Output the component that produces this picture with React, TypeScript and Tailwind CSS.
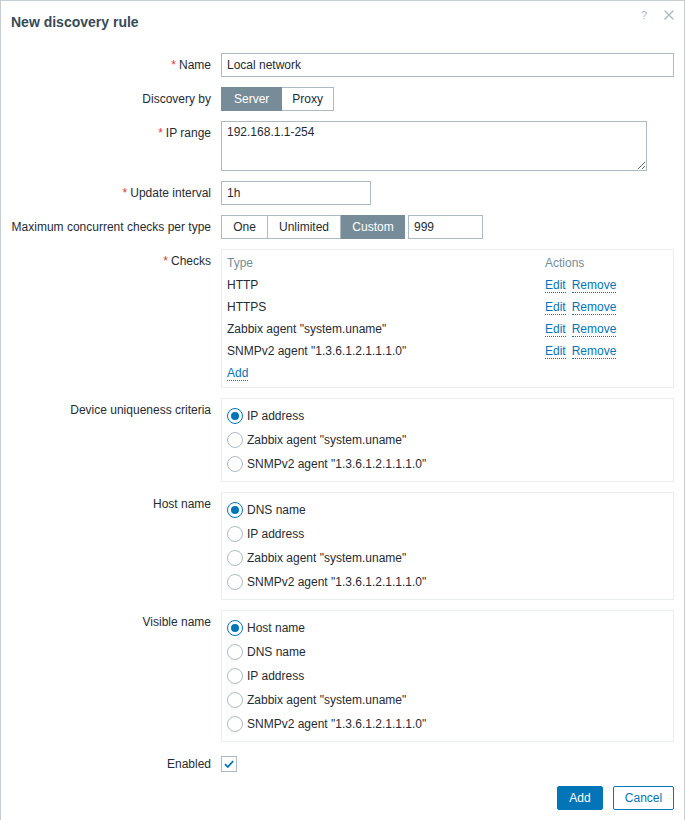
import { X } from 'lucide-react';

const checks = [
  'HTTP',
  'HTTPS',
  'Zabbix agent "system.uname"',
  'SNMPv2 agent "1.3.6.1.2.1.1.1.0"',
];

function Label({ text, required }: { text: string; required?: boolean }) {
  return (
    <div className="text-right leading-[24px] text-[#1f2c33]">
      {required && <span className="text-[#e33734] mr-[3px]">*</span>}
      {text}
    </div>
  );
}

function Radio({ label, checked }: { label: string; checked?: boolean }) {
  return (
    <div className="flex items-center h-6 gap-1">
      <span
        className={
          'w-4 h-4 rounded-full border flex items-center justify-center bg-white ' +
          (checked ? 'border-[#0275b8]' : 'border-[#acbbc2]')
        }
      >
        {checked && <span className="w-2 h-2 rounded-full bg-[#0275b8]" />}
      </span>
      <span>{label}</span>
    </div>
  );
}

function RadioBox({ items, selected }: { items: string[]; selected: number }) {
  return (
    <div className="border border-[#ebeef0] py-[5px] px-[5px]">
      {items.map((it, i) => (
        <Radio key={it} label={it} checked={i === selected} />
      ))}
    </div>
  );
}

function Link({ children }: { children: React.ReactNode }) {
  return (
    <span className="text-[#0275b8] border-b border-dotted border-[#0275b8] leading-[14px]">
      {children}
    </span>
  );
}

export default function App() {
  return (
    <div
      className="w-[685px] min-h-[830px] bg-white border border-[#c5cdd2] relative text-[12px] text-[#1f2c33]"
      style={{ fontFamily: '"Liberation Sans", Arial, sans-serif' }}
    >
      {/* header */}
      <div className="h-[41px] pt-[13px] px-[10px]">
        <h1 className="text-[14px] leading-[16px] font-bold text-[#384a56]">New discovery rule</h1>
      </div>
      <div className="absolute top-[6px] right-[7px] flex items-center gap-[14px] text-[#acbbc2]">
        <span className="text-[11px] leading-[14px]">?</span>
        <X className="w-[16px] h-[16px]" strokeWidth={2} />
      </div>

      {/* form */}
      <div className="mt-[11px] pr-[10px] grid grid-cols-[210px_1fr] gap-x-[10px] gap-y-[10px]">
        <Label text="Name" required />
        <input
          className="h-6 w-full border border-[#acbbc2] px-[5px] outline-none"
          defaultValue="Local network"
        />

        <Label text="Discovery by" />
        <div className="flex h-6">
          <span className="px-3 flex items-center bg-[#768d99] border border-[#768d99] text-white">Server</span>
          <span className="px-[10px] flex items-center border border-l-0 border-[#acbbc2]">Proxy</span>
        </div>

        <Label text="IP range" required />
        <textarea
          className="w-[426px] h-[50px] border border-[#acbbc2] px-[5px] py-[3px] leading-[14px] outline-none"
          defaultValue="192.168.1.1-254"
        />

        <Label text="Update interval" required />
        <input
          className="h-6 w-[150px] border border-[#acbbc2] px-[5px] outline-none"
          defaultValue="1h"
        />

        <Label text="Maximum concurrent checks per type" />
        <div className="flex h-6 gap-[3px]">
          <div className="flex">
            <span className="w-[47px] flex items-center justify-center border border-[#acbbc2]">One</span>
            <span className="w-[73px] flex items-center justify-center border border-l-0 border-[#acbbc2]">Unlimited</span>
            <span className="w-[64px] flex items-center justify-center bg-[#768d99] border border-[#768d99] text-white">Custom</span>
          </div>
          <input
            className="h-6 w-[75px] border border-[#acbbc2] px-[5px] outline-none"
            defaultValue="999"
          />
        </div>

        <Label text="Checks" required />
        <div className="border border-[#ebeef0] pt-[2px] pb-[3px] px-[5px]">
          <div className="grid grid-cols-[318px_1fr]">
            <div className="h-[22px] leading-[22px] text-[#768d99]">Type</div>
            <div className="h-[22px] leading-[22px] text-[#768d99]">Actions</div>
            {checks.map((c) => (
              <div key={c} className="contents">
                <div className="h-[22px] flex items-center">{c}</div>
                <div className="h-[22px] flex items-center gap-[6px]">
                  <Link>Edit</Link>
                  <Link>Remove</Link>
                </div>
              </div>
            ))}
            <div className="h-[22px] flex items-center">
              <Link>Add</Link>
            </div>
          </div>
        </div>

        <Label text="Device uniqueness criteria" />
        <RadioBox
          items={['IP address', 'Zabbix agent "system.uname"', 'SNMPv2 agent "1.3.6.1.2.1.1.1.0"']}
          selected={0}
        />

        <Label text="Host name" />
        <RadioBox
          items={['DNS name', 'IP address', 'Zabbix agent "system.uname"', 'SNMPv2 agent "1.3.6.1.2.1.1.1.0"']}
          selected={0}
        />

        <Label text="Visible name" />
        <RadioBox
          items={[
            'Host name',
            'DNS name',
            'IP address',
            'Zabbix agent "system.uname"',
            'SNMPv2 agent "1.3.6.1.2.1.1.1.0"',
          ]}
          selected={0}
        />

        <Label text="Enabled" />
        <div className="h-6 flex items-center">
          <span className="w-4 h-4 border border-[#acbbc2] flex items-center justify-center bg-white">
            <svg viewBox="0 0 12 12" className="w-[12px] h-[12px]">
              <path d="M2 6.2 L4.8 9 L10.2 3" fill="none" stroke="#0275b8" strokeWidth="1.8" />
            </svg>
          </span>
        </div>
      </div>

      {/* footer buttons */}
      <div className="flex justify-end gap-[10px] pr-[10px] mt-[10px]">
        <button className="h-6 w-[46px] bg-[#0275b8] text-white rounded-[2px] border border-[#0275b8]">Add</button>
        <button className="h-6 w-[61px] bg-white text-[#0275b8] rounded-[2px] border border-[#0275b8]">Cancel</button>
      </div>
    </div>
  );
}
